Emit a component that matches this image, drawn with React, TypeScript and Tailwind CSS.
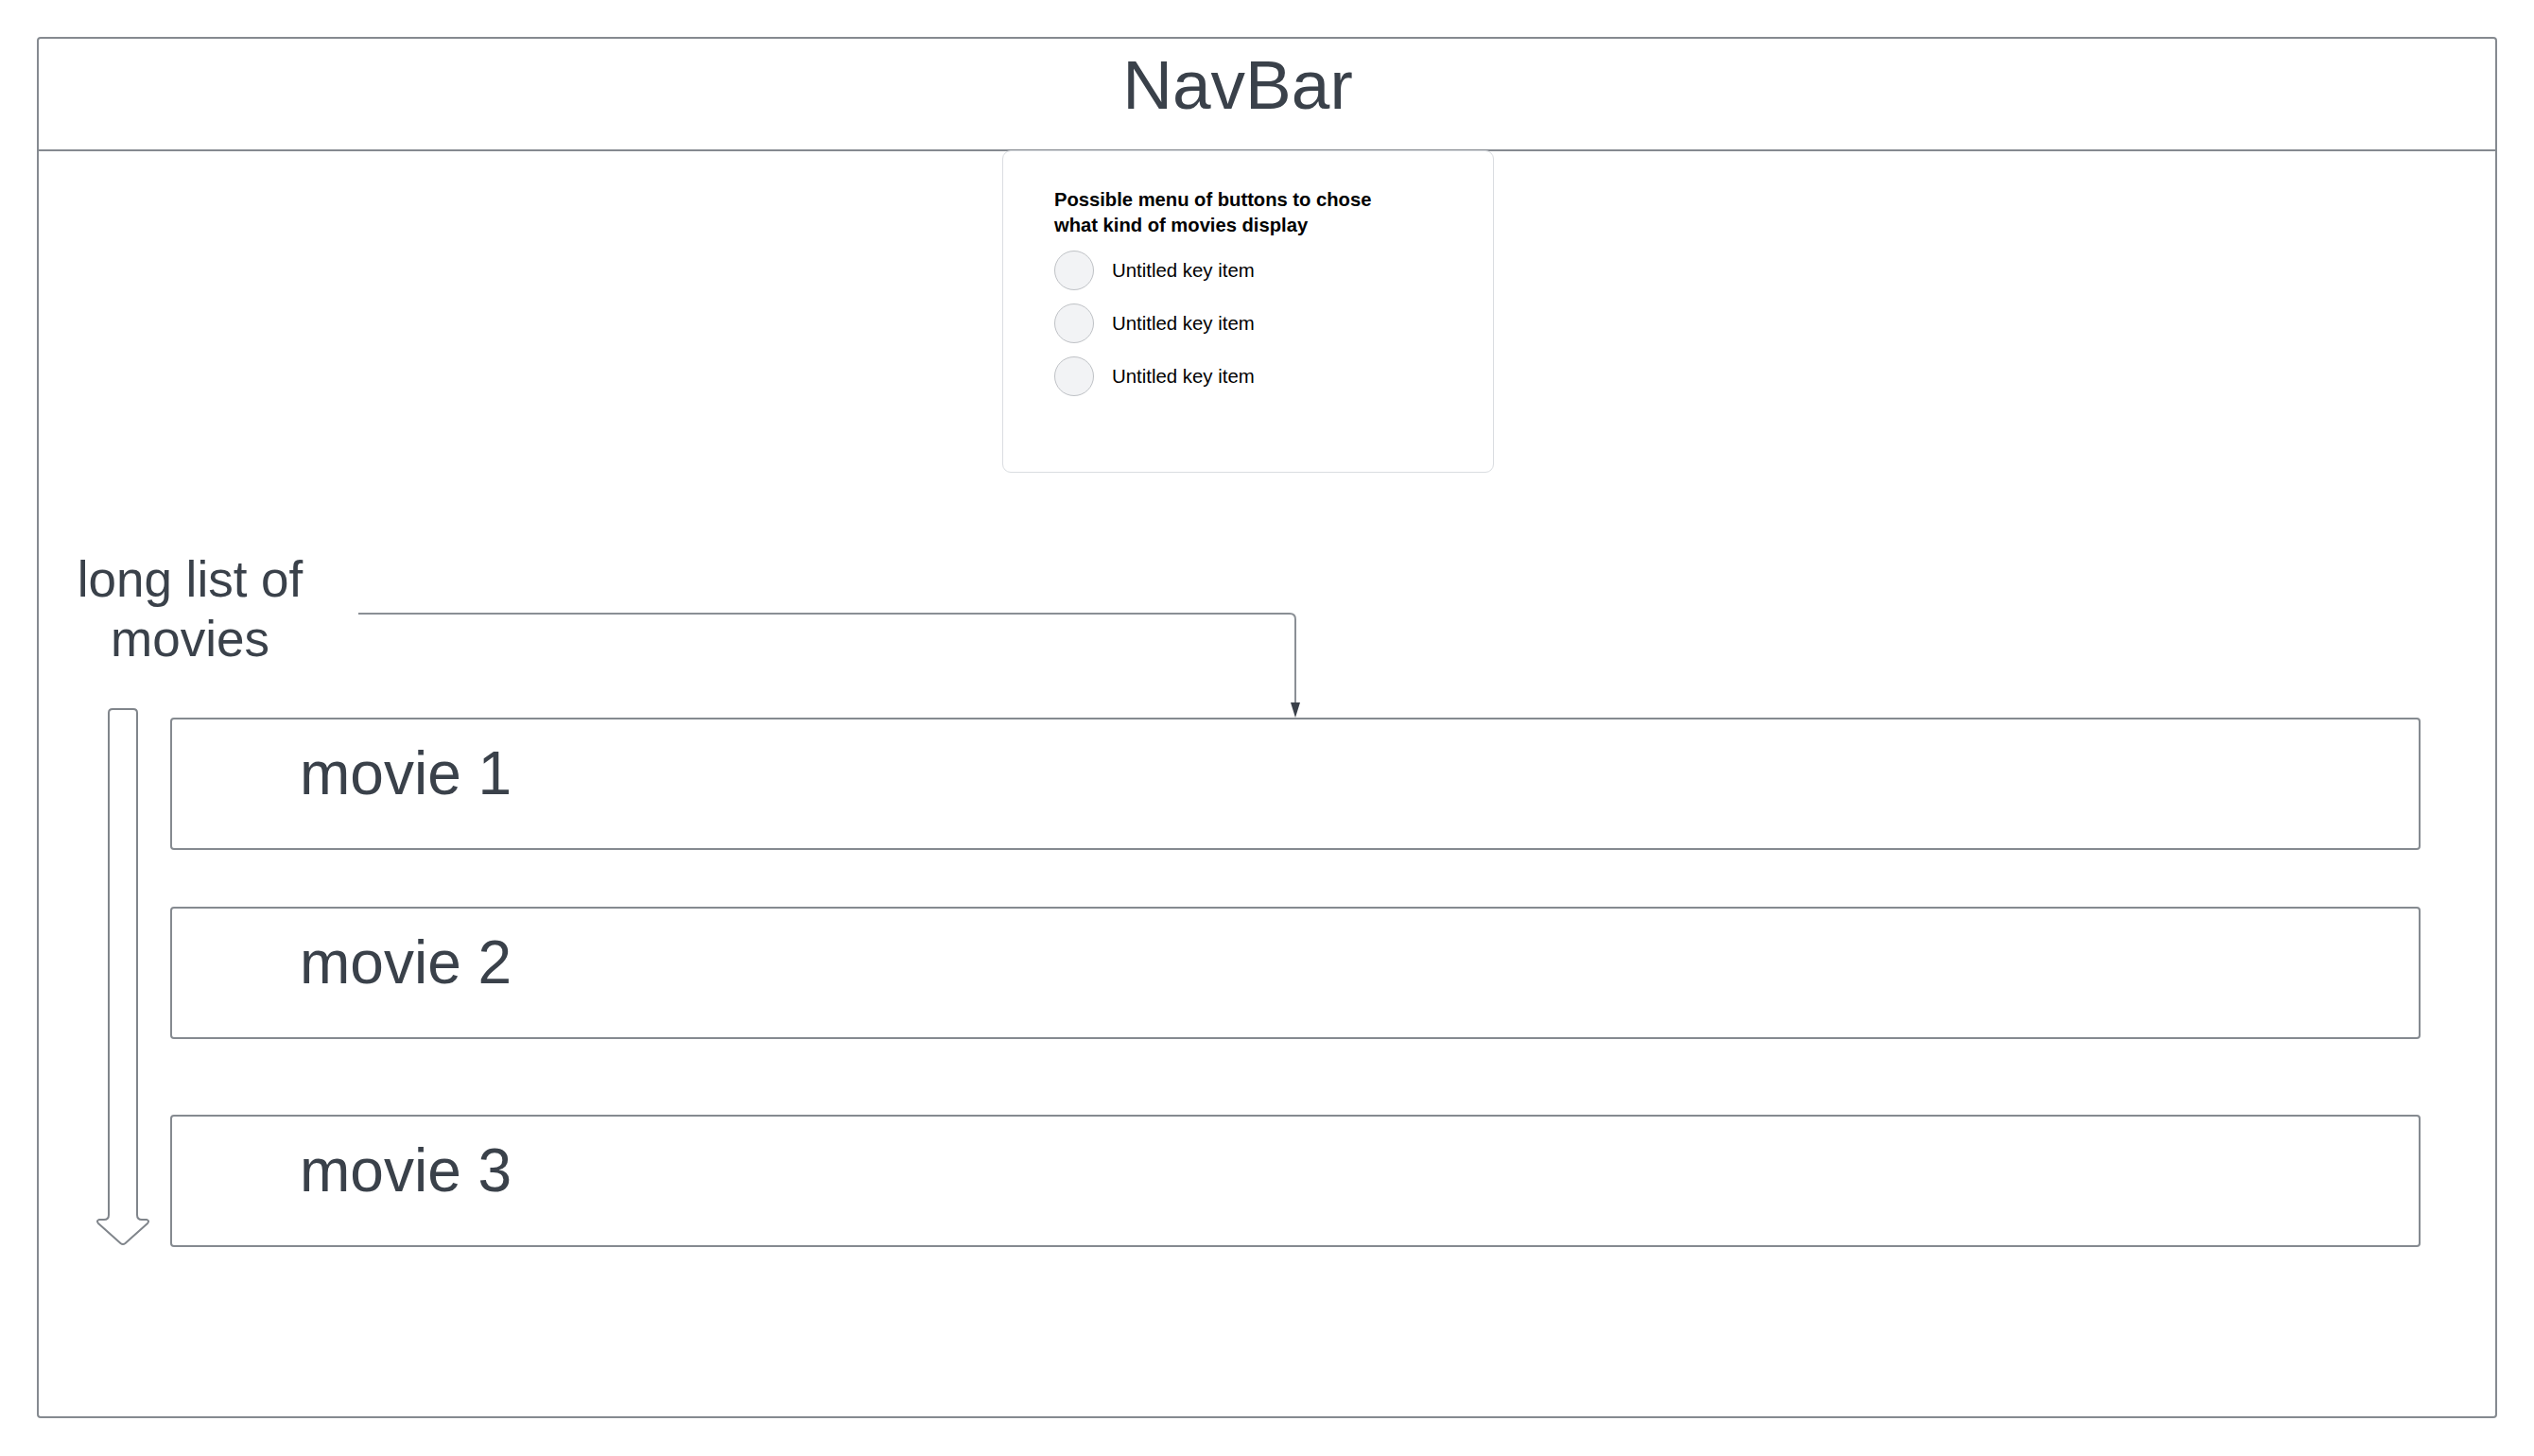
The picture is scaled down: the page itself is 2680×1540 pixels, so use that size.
import React from "react";

const font = { fontFamily: '"Liberation Sans", Arial, sans-serif' };

function KeyItem() {
  return (
    <div className="flex items-center h-[42px]">
      <div className="w-[42px] h-[42px] rounded-full bg-[#f2f3f5] border border-[#bfc2c6] shrink-0" />
      <span className="ml-[19px] text-[20.4px] leading-[24px] text-black">Untitled key item</span>
    </div>
  );
}

function MovieBox({ label, className }: { label: string; className?: string }) {
  return (
    <div
      className={
        "w-[2380px] h-[140px] border-2 border-[#858a90] rounded-[4px] pl-[135px] pt-[21px] " +
        (className ?? "")
      }
    >
      <div className="text-[64px] leading-[72px] text-[#3a414a]">{label}</div>
    </div>
  );
}

export default function App() {
  return (
    <div className="relative w-[2680px] h-[1540px] bg-white pt-[39px] pl-[39px]" style={font}>
      <div className="w-[2602px] h-[1461px] border-2 border-[#858a90] rounded-[4px] flex flex-col">
        {/* NavBar */}
        <div className="h-[119px] border-b-2 border-[#858a90] flex justify-center items-start pt-[12px] pr-[62px]">
          <span className="text-[73px] leading-[73px] text-[#3a414a]">NavBar</span>
        </div>

        {/* Menu card */}
        <div className="relative z-10 -mt-[1px] ml-[1019px] w-[520px] h-[341px] bg-white border border-[#dadde1] rounded-[9px] pt-[38px] pl-[54px]">
          <div className="text-[20.2px] leading-[27px] font-bold text-black">
            Possible menu of buttons to chose
            <br />
            what kind of movies display
          </div>
          <div className="mt-[13px] flex flex-col gap-[14px]">
            <KeyItem />
            <KeyItem />
            <KeyItem />
          </div>
        </div>

        {/* Label */}
        <div className="mt-[81px] w-[320px] text-center text-[53px] leading-[63px] text-[#3a414a]">
          long list of
          <br />
          movies
        </div>

        {/* List */}
        <div className="mt-[42px] flex">
          <svg className="ml-[59px] shrink-0" width="60" height="570" viewBox="0 0 60 570">
            <path
              d="M19,1 H41 Q45,1 45,5 V536 Q45,541 50,541 L55,541 Q58.5,542 56,545 L32.5,566 Q30,568 27.5,566 L4,545 Q1.5,542 5,541 L10,541 Q15,541 15,536 V5 Q15,1 19,1 Z"
              fill="white"
              stroke="#80858b"
              strokeWidth="2"
              strokeLinejoin="round"
            />
          </svg>
          <div className="ml-[20px] pt-[10px] flex flex-col">
            <MovieBox label="movie 1" />
            <MovieBox label="movie 2" className="mt-[60px]" />
            <MovieBox label="movie 3" className="mt-[80px]" />
          </div>
        </div>
      </div>

      {/* Connector */}
      <svg
        className="absolute left-[370px] top-[640px]"
        width="1010"
        height="125"
        viewBox="0 0 1010 125"
      >
        <path d="M9,9 H994 Q1000,9 1000,15 V106" fill="none" stroke="#8a8f95" strokeWidth="2" />
        <polygon points="995,103 1005,103 1000,119" fill="#3a414a" />
      </svg>
    </div>
  );
}
